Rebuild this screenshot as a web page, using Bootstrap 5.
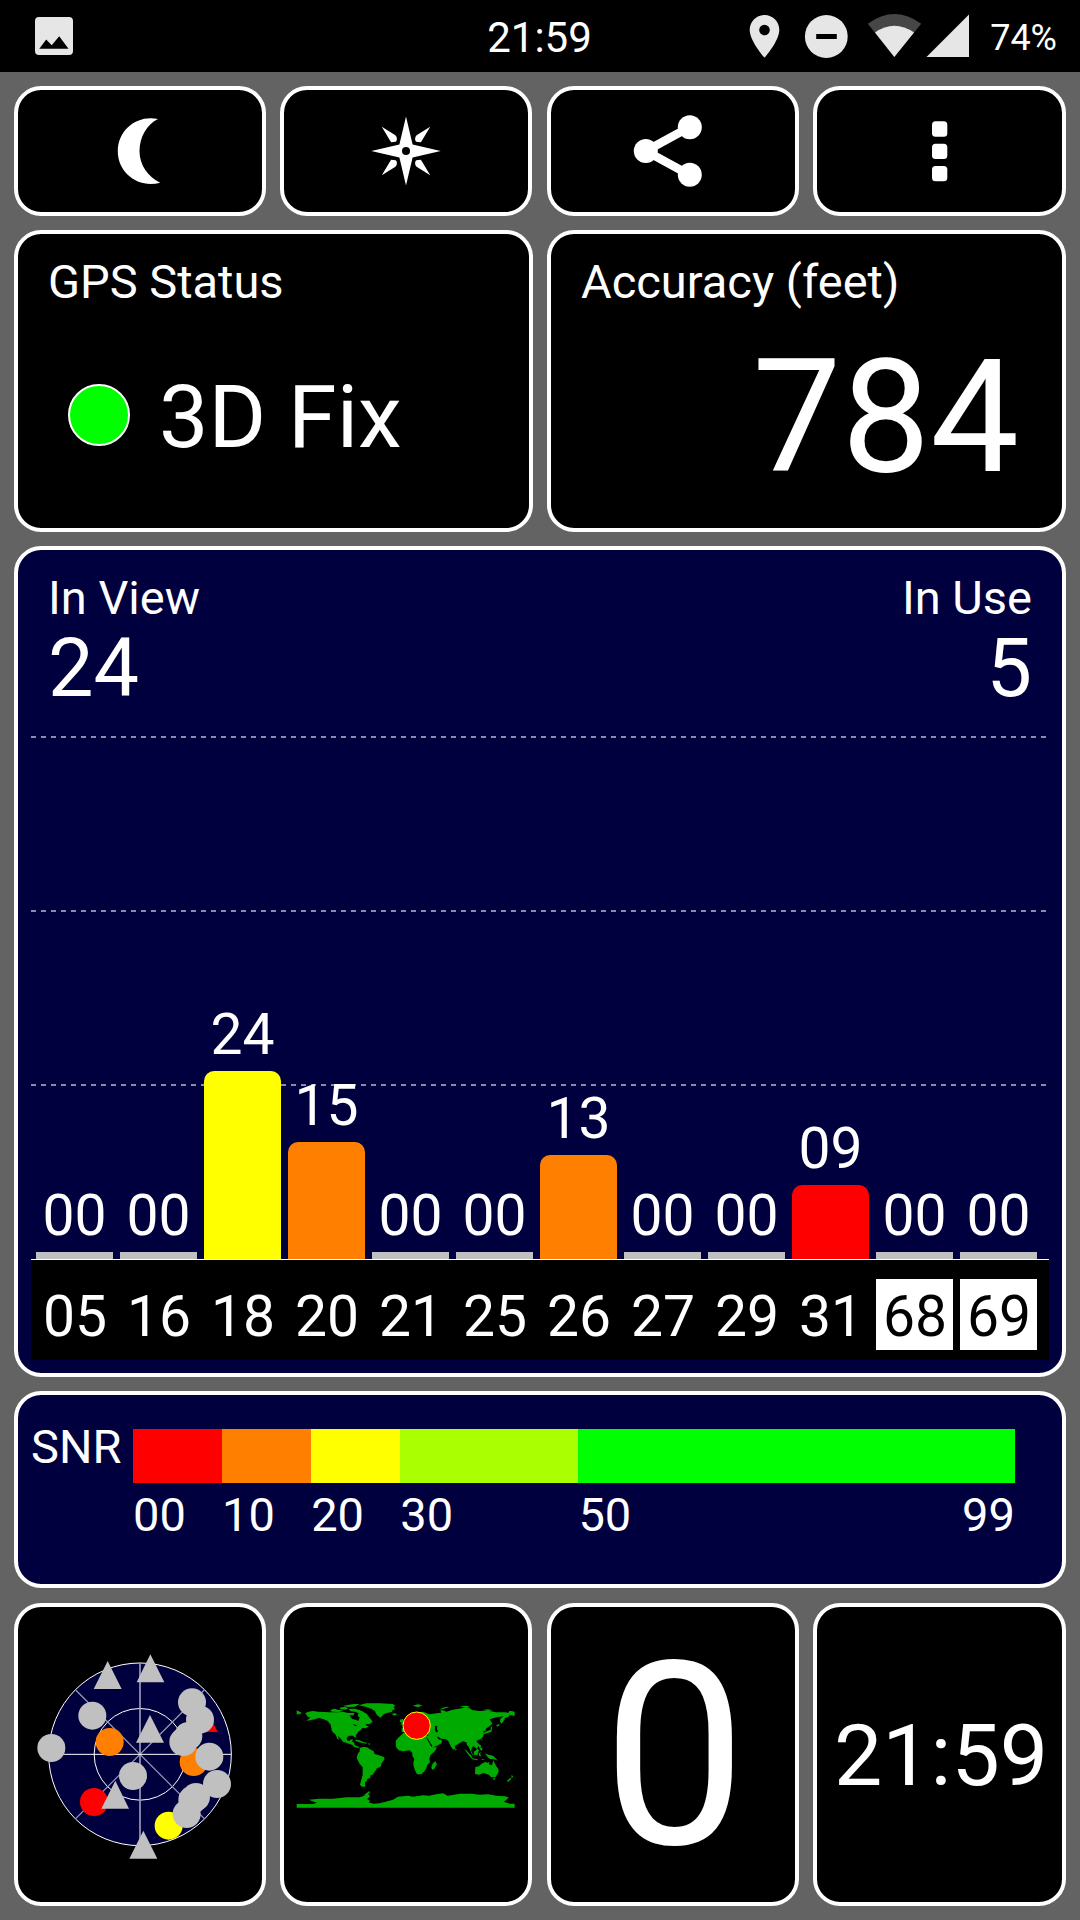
<!DOCTYPE html>
<html lang="en">
<head>
<meta charset="utf-8">
<meta name="viewport" content="width=device-width, initial-scale=1">
<title>GPS Status</title>
<link href="https://cdn.jsdelivr.net/npm/bootstrap@5.3.0/dist/css/bootstrap.min.css" rel="stylesheet">
<style>
  body { background: #636363; color: #fff; font-family: Roboto, sans-serif; width: 1080px; height: 1920px; overflow: hidden; }
  svg { display: block; flex: none; }
  .statusbar { height: 72px; background: #000; fill: #e6e6e6; }
  .clock { font-size: 42px; line-height: 50px; padding: 3px 1px 0 0; }
  .battery { font-size: 36px; line-height: 44px; margin: 4px 23px 0 20px; }
  .screen { padding: 14px 14px 0; }
  .tiles { display: flex; gap: 14px; margin-bottom: 14px; }
  .tile { flex: 1 1 0; min-width: 0; border: 4px solid #fff; border-radius: 27px; background: #000; color: #fff; }
  .quad .tile { flex: 0 0 252px; }
  .quad .tile:nth-child(2) { margin-right: 1px; }
  .quad .tile:last-child { flex: 1 1 0; }
  .navy { background: #00003f; }
  .h-tools { height: 130px; }
  .h-fix { height: 302px; }
  .h-chart { height: 831px; }
  .h-snr { height: 197px; margin-bottom: 15px; }
  .h-foot { height: 303px; }
  .caption-txt { font-size: 47px; line-height: 56px; }
  .fix-tile { padding: 20px 43px 0 30px; }
  .led { width: 62px; height: 62px; border: 2px solid #fff; border-radius: 50%; background: #0f0; margin: 19px 29px 0 20px; }
  .fix-txt { font-size: 88px; line-height: 104px; }
  .acc-txt { font-size: 158px; line-height: 186px; margin-top: 14px; }
  .chart-head { padding: 20px 30px 0 30px; }
  .count-txt { font-size: 81px; line-height: 84px; padding-top: 1px; }
  .plot { height: 549px; margin: 0 13px; padding-left: 5px; gap: 7px; border-bottom: 1px solid #fff;
    --dash: repeating-linear-gradient(90deg, rgba(255,255,255,.55) 0 5px, transparent 5px 10px);
    background: var(--dash) 0 25px / 100% 2px no-repeat, var(--dash) 0 199px / 100% 2px no-repeat, var(--dash) 0 373px / 100% 2px no-repeat; }
  .sat { width: 77px; font-size: 57px; line-height: 57px; text-align: center; flex: none; }
  .bar { margin-top: 8px; border-radius: 10px 10px 0 0; }
  .bar.none { background: silver; border-radius: 0; }
  .axis { height: 100px; margin: 0 13px; padding: 19px 0 0 5px; gap: 7px; background: #000; }
  .axis .sat { height: 71px; padding: 9px 0 0 1px; }
  .axis .glonass { background: #fff; color: #000; }
  .snr-label { width: 115px; padding: 24px 0 0 13px; }
  .snr-scale { width: 882px; padding-top: 34px; }
  .seg-bar { height: 54px; margin-bottom: 4px; }
  .c-red { background: #f00; } .c-orange { background: #ff8000; } .c-yellow { background: #ff0; }
  .c-lime { background: #aaff00; } .c-green { background: #0f0; }
  .speed { font-size: 256px; line-height: 300px; padding: 4px 0 0 3px; }
  .bigclock { font-size: 86px; line-height: 100px; padding: 2px 0 0 3px; }
</style>
</head>
<body>
<header class="statusbar d-flex">
  <div class="flex-fill w-100">
    <svg width="108" height="72" viewBox="0 0 108 72"><path fill-rule="evenodd" d="M39 17h30a4 4 0 0 1 4 4v30a4 4 0 0 1-4 4H39a4 4 0 0 1-4-4V21a4 4 0 0 1 4-4zM39.3 48.8h29.2L59.2 36.3 51.7 45.3 46.2 39.6z"/></svg>
  </div>
  <div class="clock d-flex align-items-center">21:59</div>
  <div class="flex-fill w-100 d-flex justify-content-end align-items-center">
    <svg width="31" height="72" viewBox="748 0 31 72"><path fill-rule="evenodd" d="M763.5 15c8.2 0 14.8 6.6 14.8 14.9 0 11-14.8 27.8-14.8 27.8s-14.8-16.8-14.8-27.8c0-8.3 6.600-14.9 14.8-14.9zm0 9.700a5.300 5.300 0 1 0 0 10.600 5.300 5.300 0 0 0 0-10.600z"/></svg>
    <svg class="ms-4" width="45" height="72" viewBox="803 0 45 72"><circle cx="825.3" cy="36.500" r="21.400"/><path fill="#000" d="M815.200 34h20.600v5h-20.600z"/></svg>
    <svg style="margin-left:18px" width="55" height="72" viewBox="866 0 55 72"><path fill="#464646" d="M866.800 23.700Q893.300 4.500 920.200 23.700L893.300 57z"/><path d="M874 32.400Q893.300 19 913 32.400L893.300 57z"/></svg>
    <svg style="margin-left:4px" width="44" height="72" viewBox="925 0 44 72"><path d="M925.500 57L968 14.500V57z"/></svg>
    <span class="battery">74%</span>
  </div>
</header>

<main class="screen">
  <div class="tiles quad h-tools" role="toolbar">
    <button class="tile p-0 d-flex align-items-center justify-content-center" aria-label="Night mode">
      <svg width="80" height="80" viewBox="100 111 80 80" fill="#fff"><path d="M158 119.100C138 114.500 117.800 129 117.800 151.300C117.800 173 138 188.500 160.200 182.700C148 177 139.500 165 139.500 151C139.500 137 147 124.500 158 119.100z"/></svg>
    </button>
    <button class="tile p-0 d-flex align-items-center justify-content-center" aria-label="Compass">
      <svg width="80" height="80" viewBox="-40 -40 80 80" fill="#fff"><path d="M0-34.500L6.600-6.600 34.700 0 6.600 6.600 0 34.500-6.600 6.600-34.700 0-6.600-6.600z"/><circle r="4" fill="#000"/>
        <path d="M-24.200-24.200L-11-16Q-8.500-14-9.300-10.500L-10.300-9.300-14.800-8.800-16-10.500zM24.200-24.200L11-16Q8.500-14 9.300-10.500L10.300-9.300 14.800-8.800 16-10.500zM-24.200 24.200L-11 16Q-8.500 14-9.300 10.500L-10.300 9.300-14.800 8.800-16 10.500zM24.200 24.200L11 16Q8.500 14 9.300 10.500L10.300 9.300 14.800 8.800 16 10.500z"/></svg>
    </button>
    <button class="tile p-0 d-flex align-items-center justify-content-center" aria-label="Share">
      <svg width="90" height="80" viewBox="628 111 90 80" fill="#fff"><path d="M689.800 127L645.800 151 689.800 175" fill="none" stroke="#fff" stroke-width="8.500"/><circle cx="689.800" cy="127.200" r="12"/><circle cx="645.800" cy="151" r="12"/><circle cx="689.800" cy="174.700" r="12"/></svg>
    </button>
    <button class="tile p-0 d-flex align-items-center justify-content-center" aria-label="Menu">
      <svg width="40" height="80" viewBox="919.500 111 40 80" fill="#fff"><rect x="931.500" y="121.300" width="15.300" height="15.500" rx="3.500"/><rect x="931.500" y="143.700" width="15.300" height="15.300" rx="3.500"/><rect x="931.500" y="166" width="15.300" height="15.300" rx="3.500"/></svg>
    </button>
  </div>

  <div class="tiles h-fix">
    <section class="tile fix-tile">
      <div class="caption-txt">GPS Status</div>
      <div class="d-flex" style="margin-top:55px"><span class="led"></span><span class="fix-txt">3D Fix</span></div>
    </section>
    <section class="tile fix-tile">
      <div class="caption-txt">Accuracy (feet)</div>
      <div class="acc-txt text-end">784</div>
    </section>
  </div>

  <div class="tiles h-chart">
    <section class="tile navy">
      <div class="chart-head d-flex justify-content-between">
        <div><div class="caption-txt">In View</div><div class="count-txt">24</div></div>
        <div class="text-end"><div class="caption-txt">In Use</div><div class="count-txt">5</div></div>
      </div>
      <div class="plot d-flex align-items-end">
        <div class="sat">00<div class="bar none" style="height:7px"></div></div>
        <div class="sat">00<div class="bar none" style="height:7px"></div></div>
        <div class="sat">24<div class="bar c-yellow" style="height:188px"></div></div>
        <div class="sat">15<div class="bar c-orange" style="height:117px"></div></div>
        <div class="sat">00<div class="bar none" style="height:7px"></div></div>
        <div class="sat">00<div class="bar none" style="height:7px"></div></div>
        <div class="sat">13<div class="bar c-orange" style="height:104px"></div></div>
        <div class="sat">00<div class="bar none" style="height:7px"></div></div>
        <div class="sat">00<div class="bar none" style="height:7px"></div></div>
        <div class="sat">09<div class="bar c-red" style="height:74px"></div></div>
        <div class="sat">00<div class="bar none" style="height:7px"></div></div>
        <div class="sat">00<div class="bar none" style="height:7px"></div></div>
      </div>
      <div class="axis d-flex">
        <div class="sat">05</div><div class="sat">16</div><div class="sat">18</div><div class="sat">20</div>
        <div class="sat">21</div><div class="sat">25</div><div class="sat">26</div><div class="sat">27</div>
        <div class="sat">29</div><div class="sat">31</div><div class="sat glonass">68</div><div class="sat glonass">69</div>
      </div>
    </section>
  </div>

  <div class="tiles h-snr">
    <section class="tile navy d-flex caption-txt">
      <div class="snr-label">SNR</div>
      <div class="snr-scale">
        <div class="seg-bar d-flex">
          <div class="c-red" style="width:10.101%"></div><div class="c-orange" style="width:10.101%"></div><div class="c-yellow" style="width:10.101%"></div><div class="c-lime" style="width:20.202%"></div><div class="c-green" style="width:49.495%"></div>
        </div>
        <div class="d-flex">
          <div style="width:10.101%">00</div><div style="width:10.101%">10</div><div style="width:10.101%">20</div><div style="width:20.202%">30</div><div class="d-flex justify-content-between" style="width:49.495%"><span>50</span><span>99</span></div>
        </div>
      </div>
    </section>
  </div>

  <div class="tiles quad h-foot">
    <section class="tile d-flex align-items-center justify-content-center">
      <svg width="220" height="228.670" viewBox="0 0 660 686">
        <circle cx="330" cy="343" r="274" fill="#00003f" stroke="#fff" stroke-width="3"/>
        <circle cx="330" cy="343" r="137.500" fill="none" stroke="#fff" stroke-width="3"/>
        <path d="M137 150L523 536M523 150L137 536" stroke="#9c9cb6" stroke-width="3.500"/>
        <path d="M330 69V617" stroke="#9c9cb6" stroke-width="5"/>
        <path d="M56 343H604" stroke="#fff" stroke-width="3"/>
        <path fill="#f00" d="M521 191L563 276H479z"/>
        <circle cx="192" cy="486" r="42" fill="#f00"/>
        <circle cx="416" cy="557" r="42" fill="#ff0"/>
        <g fill="#ff8000"><circle cx="239" cy="306" r="42"/><circle cx="491" cy="366" r="42"/></g>
        <g fill="silver">
          <path d="M233 63L275 147H191zM361 43L403 127H320zM360 225L402 308H318zM256 422L297 506H214zM340 572L382 656H298z"/>
          <circle cx="187" cy="227" r="42"/><circle cx="64" cy="324" r="42"/><circle cx="309" cy="408" r="42"/>
          <circle cx="486" cy="187" r="42"/><circle cx="510" cy="239" r="42"/><circle cx="475" cy="288" r="42"/><circle cx="460" cy="306" r="42"/>
          <circle cx="538" cy="350" r="42"/><circle cx="561" cy="432" r="42"/><circle cx="498" cy="471" r="42"/><circle cx="487" cy="480" r="42"/><circle cx="470" cy="522" r="42"/>
        </g>
      </svg>
    </section>
    <section class="tile d-flex align-items-center justify-content-center">
      <svg width="233.330" height="131" viewBox="28 28 700 393" fill="#00aa00">
        <!-- Antarctica -->
        <path d="M51 373H100L112 369 96 364 88 360 118 357H160L200 353H240L252 349 262 346 272 350 262 358 272 364 266 368 282 372 300 371 318 366 340 360 355 351 385 348 400 351 430 347 448 348 470 344 490 341 504 348 520 346 540 342H575L600 345 625 344 650 348 675 350 687 353 680 361 672 366 690 372H705V384H51z"/>
        <!-- North America -->
        <path d="M51 92L66 99 60 104 51 104zM76 101L86 96 100 94 115 96 150 98H175L190 96 205 100H225L220 108 212 112 218 118 232 122 236 124 240 114 234 108 238 97 250 98 262 103 268 113 275 120 279 126 270 133 258 134 262 139 268 139 260 146 248 145 243 152 236 155 233 162 228 166 230 174 225 173 220 168 208 168 201 174 202 182 209 184 212 180 220 179 217 187 223 188 225 196 232 200 240 202 236 205 225 203 218 196 208 192 190 186 184 178 174 168 178 180 173 178 168 165 157 155 153 135 144 124 132 119 118 115 105 119 92 122 80 123 92 114 82 110 80 104z"/>
        <!-- Arctic islands and Greenland -->
        <path d="M152 91L165 87 176 91 190 91 178 97 156 96zM180 84L195 81 206 85 198 90 182 88zM207 88L225 87 240 91 252 97 262 105 252 108 240 102 228 97 212 94zM190 78L208 75 222 73 240 73 225 81 205 82zM237 77L260 71 300 71 340 73 346 78 342 84 346 88 336 93 338 96 322 100 312 104 303 114 294 108 288 100 286 94 276 88 260 82zM336 102L348 101 353 104 343 108z"/>
        <path d="M226 180L240 182 251 187 262 189 261 192 245 189 228 184zM267 190h3v6h-3z"/>
        <!-- South America -->
        <path d="M240 205L250 202 262 203 270 208 282 215 285 223 298 227 313 232 315 238 306 250 303 261 292 266 285 277 278 286 272 287 272 294 262 299 262 303 256 308 257 321 246 321 241 315 245 300 249 285 249 263 240 252 231 235 234 223 240 215z"/>
        <path d="M268 335L272 337 266 342 270 350 252 348 258 342z"/>
        <!-- Europe and Asia -->
        <path d="M366 157L366 146 377 144 380 138 372 135 386 130 396 124 408 122 396 114 402 105 418 98 430 96 450 104 470 101 485 99 482 92 490 92 500 96 520 90 545 86 560 83 568 84 577 91 600 94 625 93 650 98 675 98 686 99 690 93 705 96V109L690 106 685 112 675 116 676 118 666 132 661 126 662 117 672 110 655 112 640 116 630 119 633 124 638 132 630 139 625 143 619 147 617 155 610 153 613 161 610 171 602 179 590 183 594 189 599 197 591 208 582 199 578 202 574 213 582 228 577 224 570 209 568 203 562 196 560 188 550 185 540 190 526 199 526 207 521 210 515 203 509 191 506 184 497 178 482 177 487 184 486 191 472 198 456 204 447 190 438 172 446 166 445 161 430 160 420 155 400 153 392 148 380 150 374 158z"/>
        <path d="M361 120L370 117 372 128 376 133 362 135 366 128 360 128z"/>
        <path d="M399 78L414 74 428 77 416 83zM477 90L490 84 500 81 510 82 490 88zM540 80L560 78 572 81 560 84zM608 91L625 89 640 92 625 94z"/>
        <!-- Africa -->
        <path d="M371 160L388 156 400 155 402 161 418 164 426 164 440 166 446 180 454 195 458 203H472L466 214 452 227 449 238 451 248 443 256 440 266 434 275 425 284H412L406 272 402 260 401 248 404 239 398 228 398 219 390 212 370 215 357 212 349 202 348 184 356 174z"/>
        <path d="M467 244L471 254 464 268 457 270 455 261 459 252z"/>
        <!-- Lakes, seas and gulfs -->
        <path fill="#000" d="M466 138l7 1 -1 8 3 10 -6 1 -3-8zM210 108l7-2 5 6-6 3zM219 133l10 3 4 4-8-2zM476 171l10 8 -7 1 -8-8zM439 173l4 2 15 24-3 2z"/>
        <!-- South-east Asia, Japan and Oceania -->
        <path d="M611 160L618 156 633 150 633 144 638 139 635 157 624 160 614 163zM650 137l8-4 2 4-8 4zM596 189l4 6 4 1 -1 7 6 5 -3 6 -6-6 -2-8zM606 176l3 4-3 4zM554 209l5 2 17 18 1 7-5-3zM576 235l18 4-1 3-18-4zM582 217l12-10 4 5-5 15-10-2zM597 220l8-2-4 5 4 7-6-1zM606 239l10-1-9 4zM616 221l10 4 14 3 8 8 6 7-12-5-12 0-8-8zM526 206l5 3-3 5z"/>
        <path d="M587 262L598 260 606 252 616 247 624 249 629 246 628 254 637 257 641 242 646 252 650 260 656 268 657 276 648 292 635 293 627 285 612 280 598 285 586 283z"/>
        <path d="M641 295h6l-2 5h-4zM696 285l5 6-6 5zM692 294l3 4-9 8-5-1z"/>
        <circle cx="411" cy="138" r="41" fill="#f00" stroke="#ff0" stroke-width="3"/>
      </svg>
    </section>
    <section class="tile d-flex align-items-center justify-content-center"><span class="speed">0</span></section>
    <section class="tile d-flex align-items-center justify-content-center"><span class="bigclock">21:59</span></section>
  </div>
</main>
<script src="https://cdn.jsdelivr.net/npm/bootstrap@5.3.0/dist/js/bootstrap.bundle.min.js"></script>
</body>
</html>
